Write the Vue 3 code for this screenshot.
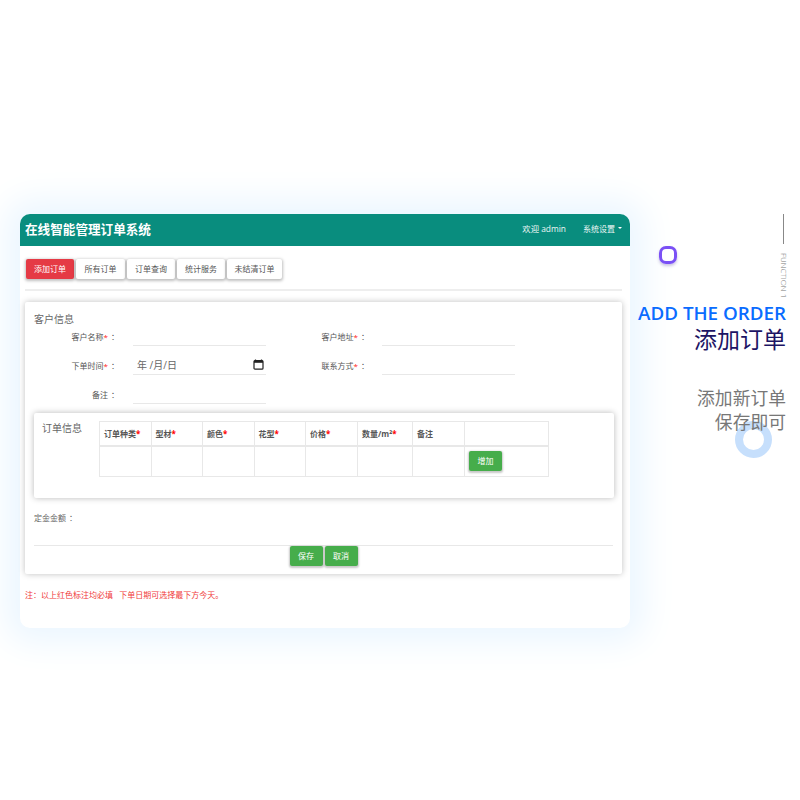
<script setup>
const tabs = ['添加订单', '所有订单', '订单查询', '统计服务', '未结清订单']
const cols = [
  { name: '订单种类', w: 51.5, req: true },
  { name: '型材', w: 51.5, req: true },
  { name: '颜色', w: 51.5, req: true },
  { name: '花型', w: 51.5, req: true },
  { name: '价格', w: 52, req: true },
  { name: '数量/m²', w: 55, req: true },
  { name: '备注', w: 52, req: false },
  { name: '', w: 84, req: false }
]
</script>

<template>
  <div class="page">
    <div class="panel">
      <header class="topbar">
        <h1>在线智能管理订单系统</h1>
        <div class="top-right">
          <span>欢迎 admin</span>
          <span class="menu">系统设置<i class="caret"></i></span>
        </div>
      </header>

      <div class="body">
        <nav class="tabs">
          <button v-for="(t, i) in tabs" :key="t" class="tab" :class="{ active: i === 0 }">{{ t }}</button>
        </nav>

        <div class="card">
          <h2>客户信息</h2>
          <div class="form-row first">
            <label>客户名称<b>*</b><span class="colon">：</span></label>
            <div class="field"></div>
            <label class="right">客户地址<b>*</b><span class="colon">：</span></label>
            <div class="field"></div>
          </div>
          <div class="form-row">
            <label>下单时间<b>*</b><span class="colon">：</span></label>
            <div class="field date">
              <span>年 /月/日</span>
              <svg width="11" height="11" viewBox="0 0 11 11">
                <path d="M2.5 0.5v1.5M8.5 0.5v1.5" stroke="#222" stroke-width="1.2" fill="none" />
                <rect x="1" y="1.6" width="9" height="8.6" rx="1" stroke="#222" stroke-width="1.2" fill="none" />
                <rect x="1" y="1.6" width="9" height="2.2" fill="#222" />
              </svg>
            </div>
            <label class="right">联系方式<b>*</b><span class="colon">：</span></label>
            <div class="field"></div>
          </div>
          <div class="form-row">
            <label>备注<span class="colon">：</span></label>
            <div class="field"></div>
          </div>

          <div class="inner">
            <h3>订单信息</h3>
            <table>
              <thead>
                <tr>
                  <th v-for="c in cols" :key="c.name" :style="{ width: c.w + 'px' }">
                    {{ c.name }}<b v-if="c.req">*</b>
                  </th>
                </tr>
              </thead>
              <tbody>
                <tr>
                  <td v-for="(c, i) in cols" :key="i">
                    <button v-if="i === cols.length - 1" class="btn">增加</button>
                  </td>
                </tr>
              </tbody>
            </table>
          </div>

          <p class="deposit">定金金额<span class="colon">：</span></p>
          <div class="actions">
            <button class="btn">保存</button>
            <button class="btn">取消</button>
          </div>
        </div>

        <p class="note">注：以上红色标注均必填&nbsp;&nbsp;&nbsp;下单日期可选择最下方今天。</p>
      </div>
    </div>

    <aside class="side">
      <div class="line"></div>
      <div class="fn">FUNCTION 1</div>
      <div class="en">ADD THE ORDER</div>
      <div class="cn">添加订单</div>
      <p class="desc">添加新订单<br />保存即可</p>
    </aside>

    <i class="ring-purple"></i>
    <i class="ring-blue"></i>
  </div>
</template>

<style scoped>
.page {
  position: relative;
  width: 800px;
  height: 800px;
  overflow: hidden;
  display: flex;
  background: #fff;
  padding: 214px 0 0 20px;
  box-sizing: border-box;
  font-family: "Open Sans", "Noto Sans CJK SC", sans-serif;
}
.panel {
  flex: none;
  width: 610px;
  height: 414px;
  background: #fff;
  border-radius: 10px;
  box-shadow: 0 0 34px 14px #ebf6ff;
  color: #555;
}
.topbar {
  height: 32px;
  background: #098d7e;
  border-radius: 10px 10px 0 0;
  display: flex;
  align-items: center;
  justify-content: space-between;
  padding: 0 8px 4px 5px;
  box-sizing: border-box;
  color: #fff;
}
.topbar h1 {
  margin: 0;
  font-size: 12.6px;
  font-weight: 700;
}
.top-right {
  display: flex;
  gap: 17px;
  font-size: 8.4px;
  color: #eef8f6;
}
.menu {
  display: flex;
  align-items: center;
  gap: 3px;
  font-size: 8px;
}
.caret {
  width: 0;
  height: 0;
  border: 2px solid transparent;
  border-top-color: #fff;
  border-bottom: 0;
}
.body {
  padding: 13px 8px 0 5px;
}
.tabs {
  display: flex;
  gap: 2px;
  padding: 0 0 10px 1px;
  border-bottom: 2px solid #eee;
}
.tab {
  width: 48px;
  height: 20px;
  padding: 0 0 2px;
  border: 0;
  border-radius: 2px;
  background: #fff;
  color: #555;
  font: inherit;
  font-size: 8px;
  box-shadow: 0 1px 3px 1px rgba(0, 0, 0, 0.25);
}
.tab.active {
  background: #e53a45;
  color: #fff;
}
.tab:nth-child(2) {
  width: 49px;
}
.tab:last-child {
  width: 55px;
}
.card {
  margin-top: 11px;
  width: 597px;
  height: 272px;
  padding: 10px 9px 0;
  box-sizing: border-box;
  background: #fff;
  border-radius: 2px;
  box-shadow: 0 0 6px rgba(0, 0, 0, 0.25);
}
h2, h3 {
  margin: 0;
  font-size: 10px;
  line-height: 14px;
  font-weight: 400;
  color: #666;
}
.form-row {
  display: flex;
  height: 29px;
  align-items: flex-end;
  font-size: 8px;
}
.form-row.first {
  height: 20px;
}
.form-row label {
  width: 90px;
  margin-left: -8px;
  margin-right: 17px;
  flex: none;
  text-align: right;
  line-height: 18px;
}
.form-row label.right {
  width: 100px;
  margin-left: 0;
  margin-right: 16px;
}
.form-row b {
  color: #f22;
  font-weight: 400;
}
.colon {
  display: inline-block;
  width: 8px;
  margin: 0 -3px 0 3px;
}
.field {
  width: 133px;
  height: 20px;
  flex: none;
  border-bottom: 1px solid #e8e8e8;
  box-sizing: border-box;
}
.field.date {
  display: flex;
  align-items: center;
  justify-content: space-between;
  padding: 0 2px 0 4px;
  font-size: 10px;
  color: #666;
}
.inner {
  display: flex;
  margin-top: 9px;
  width: 580px;
  height: 85px;
  padding: 8px 0 0 8px;
  box-sizing: border-box;
  background: #fff;
  border-radius: 2px;
  box-shadow: 0 0 6px rgba(0, 0, 0, 0.28);
}
.inner h3 {
  width: 57px;
  flex: none;
}
table {
  border-collapse: collapse;
  table-layout: fixed;
  width: 449px;
  height: 55px;
  font-size: 8px;
}
th, td {
  box-sizing: border-box;
  border: 1px solid #e8e8e8;
  padding: 0 0 0 4px;
  text-align: left;
  color: #555;
}
th {
  height: 24px;
  font-weight: 700;
  border-bottom-width: 2px;
}
th b {
  color: #f00;
  font-weight: 700;
}
td {
  height: 31px;
}
.btn {
  width: 33px;
  height: 20px;
  padding: 0 0 2px;
  border: 0;
  border-radius: 2px;
  background: #46ad4b;
  color: #fff;
  font: inherit;
  font-size: 8px;
  box-shadow: 0 1px 2px 1px rgba(0, 0, 0, 0.22);
}
.deposit {
  margin: 14px 0 0;
  font-size: 8px;
  line-height: 12px;
  color: #666;
}
.actions {
  margin-top: 21px;
  height: 21px;
  display: flex;
  gap: 2px;
  justify-content: center;
  border-top: 1px solid #e8e8e8;
}
.note {
  margin: 15px 0 0;
  font-size: 8px;
  line-height: 12px;
  color: #f03a3a;
}
.side {
  position: relative;
  z-index: 1;
  flex: 1;
  display: flex;
  flex-direction: column;
  align-items: flex-end;
  padding-right: 14px;
}
.line {
  width: 1px;
  height: 30px;
  margin-right: 2px;
  background: #888;
}
.fn {
  writing-mode: vertical-rl;
  margin-top: 9px;
  margin-right: -2px;
  font-size: 8px;
  line-height: 8px;
  font-family: "Open Sans", sans-serif;
  font-weight: 300;
  color: #777;
}
.en {
  margin-top: 4px;
  white-space: nowrap;
  font-size: 18.8px;
  line-height: 22px;
  font-weight: 600;
  font-family: "Open Sans", sans-serif;
  color: #0a6cff;
}
.cn {
  font-size: 23px;
  line-height: 30px;
  color: #1d1464;
}
.desc {
  margin: 32px 0 0;
  text-align: right;
  font-size: 17.8px;
  line-height: 24px;
  color: #777;
}
.ring-purple {
  position: absolute;
  left: 659px;
  top: 246px;
  width: 18px;
  height: 18px;
  box-sizing: border-box;
  border: 3px solid #7a50f5;
  border-radius: 7px;
  box-shadow: 0 2px 3px rgba(80, 60, 160, 0.3);
}
.ring-blue {
  position: absolute;
  left: 735px;
  top: 421px;
  width: 37px;
  height: 37px;
  box-sizing: border-box;
  border: 8px solid #c6dffc;
  border-radius: 50%;
}
</style>

<style>
html, body { margin: 0; background: #fff; }
</style>
